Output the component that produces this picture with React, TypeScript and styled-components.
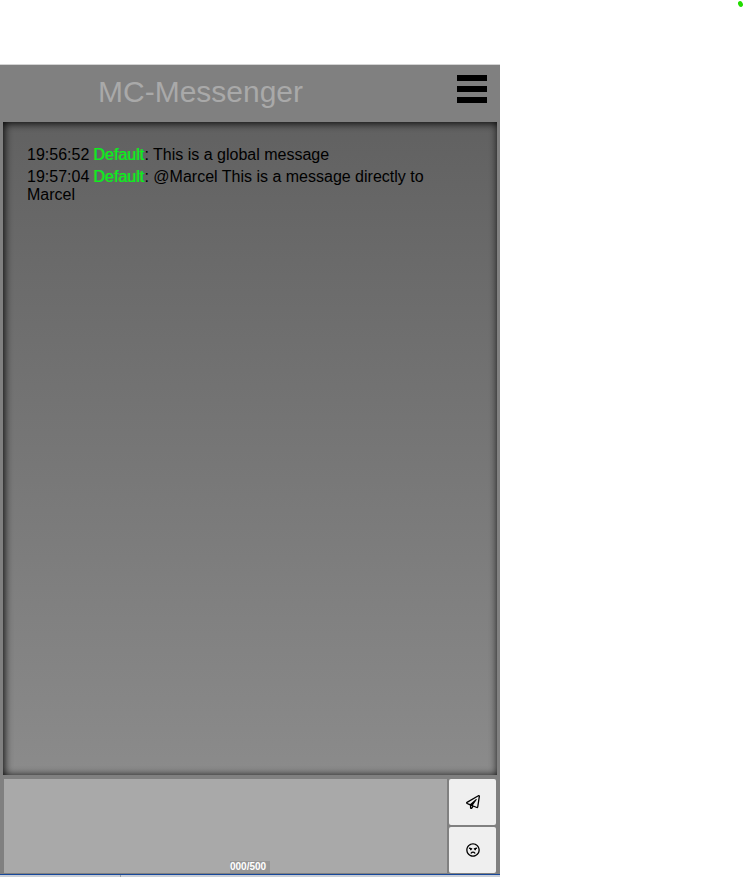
import React, { useState } from "react";
import styled, { createGlobalStyle } from "styled-components";
import { FaRegAngry, FaRegPaperPlane } from "react-icons/fa";

const GlobalStyle = createGlobalStyle`
  *, *::before, *::after { box-sizing: border-box; }
  body {
    margin: 0;
    background: #fff;
    color: #000;
    font-family: "Liberation Sans", Arial, sans-serif;
  }
`;

const Page = styled.div`
  position: relative;
  display: flex;
  flex-direction: column;
  min-height: 100vh;
  padding-top: 64px;
`;

const StatusMark = styled.svg`
  position: absolute;
  top: 0;
  right: 0;
  width: 6px;
  height: 8px;
`;

const Messenger = styled.main`
  flex: 1;
  display: flex;
  flex-direction: column;
  width: 100%;
  max-width: 500px;
  background: #808080;
  border-top: 1px solid #d4d4d4;
`;

const Header = styled.header`
  display: flex;
  align-items: flex-start;
  justify-content: space-between;
  height: 57px;
  padding: 10px 13px 0 98px;
`;

const Title = styled.h1`
  margin: 0;
  color: #a9a9a9;
  font-size: 30px;
  font-weight: 400;
  line-height: 34px;
`;

const MenuButton = styled.button`
  display: flex;
  flex-direction: column;
  gap: 5px;
  width: 30px;
  padding: 0;
  border: 0;
  background: none;
  cursor: pointer;
`;

const MenuBar = styled.span`
  height: 6px;
  background: #000;
`;

const MessageList = styled.ul`
  flex: 1;
  display: flex;
  flex-direction: column;
  gap: 4px;
  margin: 0 3px;
  padding: 24px;
  list-style: none;
  background: linear-gradient(#616161, #8b8b8b);
  box-shadow: inset 1px 1px 8px #000;
`;

const Message = styled.li`
  font-size: 16px;
  line-height: 18px;
`;

const Sender = styled.span<{ $color: string }>`
  color: ${({ $color }) => $color};
  text-shadow: -1px 0 0 ${({ $color }) => $color}99;
`;

const Composer = styled.form`
  display: flex;
  gap: 2px;
  padding: 4px 4px 1px;
`;

const Field = styled.div`
  position: relative;
  flex: 1;
  display: flex;
`;

const MessageInput = styled.textarea`
  flex: 1;
  min-width: 0;
  height: 94px;
  padding: 8px;
  border: 0;
  outline: 0;
  resize: none;
  background: #a9a9a9;
  font: inherit;
`;

const Counter = styled.output`
  position: absolute;
  right: 177px;
  bottom: 0;
  width: 40px;
  background: #969696;
  color: #fff;
  font-size: 10px;
  font-weight: 700;
  line-height: 12px;
`;

const Actions = styled.div`
  display: flex;
  flex-direction: column;
  gap: 2px;
`;

const ActionButton = styled.button`
  flex: 1;
  display: flex;
  align-items: center;
  justify-content: center;
  width: 47px;
  padding: 0;
  border: 0;
  border-radius: 2px;
  background: #efefef;
  color: #000;
  font-size: 14px;
  cursor: pointer;
`;

const BottomEdge = styled.div`
  display: flex;
  height: 3px;
  border-top: 1px solid #17489b;
  background: #c9ced6;
`;

const EdgeSegment = styled.div`
  width: 121px;
  border-right: 1px solid #969ca4;
`;

const LIMIT = 500;

const messages = [
  { time: "19:56:52", sender: "Default", color: "#0cf01c", text: "This is a global message" },
  { time: "19:57:04", sender: "Default", color: "#0cf01c", text: "@Marcel This is a message directly to Marcel" },
];

export default function App() {
  const [draft, setDraft] = useState("");

  return (
    <>
      <GlobalStyle />
      <Page>
        <StatusMark viewBox="0 0 6 8" aria-hidden="true">
          <ellipse cx="3.5" cy="4" rx="2.3" ry="3" fill="#22dd00" transform="rotate(-25 3.5 4)" />
        </StatusMark>
        <Messenger>
          <Header>
            <Title>MC-Messenger</Title>
            <MenuButton type="button" aria-label="Menu">
              <MenuBar />
              <MenuBar />
              <MenuBar />
            </MenuButton>
          </Header>
          <MessageList>
            {messages.map((message) => (
              <Message key={message.time}>
                {message.time} <Sender $color={message.color}>{message.sender}</Sender>: {message.text}
              </Message>
            ))}
          </MessageList>
          <Composer onSubmit={(event) => event.preventDefault()}>
            <Field>
              <MessageInput
                id="draft"
                aria-label="Message"
                maxLength={LIMIT}
                value={draft}
                onChange={(event) => setDraft(event.target.value)}
              />
              <Counter htmlFor="draft">
                {String(draft.length).padStart(3, "0")}/{LIMIT}
              </Counter>
            </Field>
            <Actions>
              <ActionButton type="submit" aria-label="Send">
                <FaRegPaperPlane />
              </ActionButton>
              <ActionButton type="button" aria-label="Choose emoji">
                <FaRegAngry />
              </ActionButton>
            </Actions>
          </Composer>
          <BottomEdge>
            <EdgeSegment />
          </BottomEdge>
        </Messenger>
      </Page>
    </>
  );
}
